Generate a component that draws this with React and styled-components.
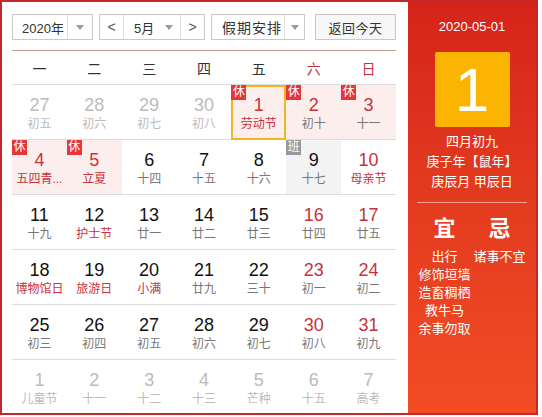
import React from 'react'
import styled, { createGlobalStyle } from 'styled-components'

const GlobalStyle = createGlobalStyle`
  body {
    margin: 0;
    background: #fff;
    font-family: "Liberation Sans", "Noto Sans CJK SC", sans-serif;
  }
`

const Frame = styled.div`
  width: 538px;
  height: 415px;
  box-sizing: border-box;
  border: 2px solid #c4282b;
  display: flex;
  overflow: hidden;
`

const LeftPanel = styled.div`
  width: 406px;
  box-sizing: border-box;
  padding: 12px 12px 0 10px;
  background: #fff;
`

const Toolbar = styled.div`
  display: flex;
  gap: 6px;
  height: 26px;
`

const Box = styled.div`
  display: flex;
  width: ${p => p.w}px;
  height: 26px;
  box-sizing: border-box;
  border: 1px solid #c8c8c8;
  background: #fff;
  color: #333;
  font-size: 13px;
`

const Value = styled.div`
  flex: 1;
  display: flex;
  align-items: center;
  padding-left: ${p => p.pl || 9}px;
  letter-spacing: ${p => p.ls || 0}px;
  font-size: ${p => p.fs || 13}px;
`

const ArrowPart = styled.div`
  width: ${p => p.w}px;
  display: flex;
  align-items: center;
  justify-content: center;
  border-left: ${p => (p.divider ? '1px solid #dedede' : 'none')};
`

const Triangle = styled.span`
  width: 0;
  height: 0;
  border-left: 4px solid transparent;
  border-right: 4px solid transparent;
  border-top: 5px solid #999;
`

const StepButton = styled.div`
  width: 23px;
  display: flex;
  align-items: center;
  justify-content: center;
  color: #555;
  font-size: 14px;
  ${p => (p.side === 'left' ? 'border-right: 1px solid #dedede;' : 'border-left: 1px solid #dedede;')}
`

const TodayButton = styled.div`
  margin-left: auto;
  width: 81px;
  height: 26px;
  box-sizing: border-box;
  border: 1px solid #c8c8c8;
  background: #f7f7f7;
  color: #333;
  font-size: 13px;
  letter-spacing: 0.5px;
  display: flex;
  align-items: center;
  justify-content: center;
`

const WeekHeader = styled.div`
  margin-top: 10px;
  border-top: 1px solid #c49a94;
  border-bottom: 1px solid #dcdcdc;
  height: 33px;
  display: grid;
  grid-template-columns: repeat(7, 1fr);
`

const WeekDay = styled.div`
  display: flex;
  align-items: center;
  justify-content: center;
  font-size: 14px;
  color: ${p => (p.weekend ? '#c8323a' : '#333')};
`

const Grid = styled.div`
  display: grid;
  grid-template-columns: repeat(7, 1fr);
  grid-auto-rows: 55px;
`

const Cell = styled.div`
  position: relative;
  box-sizing: border-box;
  border-bottom: 1px solid #dcdcdc;
  display: flex;
  flex-direction: column;
  align-items: center;
  padding-top: 9px;
  background: ${p => (p.kind === 'hol' ? '#fdeeee' : p.kind === 'work' ? '#f3f3f3' : 'transparent')};
  ${p => p.selected && 'outline: 2px solid #f3b51e; outline-offset: -2px;'}
`

const DayNum = styled.div`
  font-size: 18px;
  line-height: 22px;
  color: ${p => p.color};
`

const Lunar = styled.div`
  font-size: 12px;
  line-height: 16px;
  white-space: nowrap;
  color: ${p => p.color};
`

const Badge = styled.span`
  position: absolute;
  top: 0;
  left: 0;
  width: 15px;
  height: 15px;
  font-size: 12px;
  line-height: 15px;
  text-align: center;
  color: #fff;
  background: ${p => (p.work ? '#999' : '#e5373a')};
`

const RightPanel = styled.div`
  flex: 1;
  background: linear-gradient(180deg, #d5241a 0%, #e23a1f 45%, #f24c24 100%);
  color: #fff;
  display: flex;
  flex-direction: column;
  align-items: center;
  padding-top: 17px;
`

const DateText = styled.div`
  font-size: 13px;
  line-height: 16px;
`

const BigDay = styled.div`
  margin-top: 17px;
  width: 75px;
  height: 75px;
  border-radius: 2px;
  background: #fbb500;
  display: flex;
  align-items: center;
  justify-content: center;
  font-size: 62px;
  color: #fff;
`

const LunarInfo = styled.div`
  margin-top: 5px;
  font-size: 13px;
  line-height: 20px;
  text-align: center;
`

const Divider = styled.div`
  margin-top: 10px;
  width: 110px;
  height: 1px;
  background: #f7a08e;
`

const Columns = styled.div`
  margin-top: 13px;
  width: 110px;
  display: grid;
  grid-template-columns: 1fr 1fr;
`

const Column = styled.div`
  display: flex;
  flex-direction: column;
  align-items: center;
`

const ColTitle = styled.div`
  font-size: 22px;
  font-weight: bold;
  line-height: 26px;
  margin-bottom: 6px;
`

const ColItem = styled.div`
  font-size: 13px;
  line-height: 18px;
  white-space: nowrap;
`

const O = 'other'
const days = [
  [27, '初五', O], [28, '初六', O], [29, '初七', O], [30, '初八', O],
  [1, '劳动节', 'hol', true, true], [2, '初十', 'hol'], [3, '十一', 'hol'],
  [4, '五四青...', 'hol', true], [5, '立夏', 'hol', true], [6, '十四'], [7, '十五'], [8, '十六'], [9, '十七', 'work'], [10, '母亲节', 'we', true],
  [11, '十九'], [12, '护士节', null, true], [13, '廿一'], [14, '廿二'], [15, '廿三'], [16, '廿四', 'we'], [17, '廿五', 'we'],
  [18, '博物馆日', null, true], [19, '旅游日', null, true], [20, '小满', null, true], [21, '廿九'], [22, '三十'], [23, '初一', 'we'], [24, '初二', 'we'],
  [25, '初三'], [26, '初四'], [27, '初五'], [28, '初六'], [29, '初七'], [30, '初八', 'we'], [31, '初九', 'we'],
  [1, '儿童节', O], [2, '十一', O], [3, '十二', O], [4, '十三', O], [5, '芒种', O], [6, '十五', O], [7, '高考', O],
]

const RED = '#c8323a'

const DayCell = ({ d }) => {
  const [num, lunar, kind, fest, selected] = d
  const other = kind === O
  const numColor = other ? '#bbb' : kind === 'hol' || kind === 'we' ? RED : '#111'
  const lunarColor = other ? '#bbb' : fest ? RED : '#777'
  return (
    <Cell kind={kind} selected={selected}>
      {kind === 'hol' && <Badge>休</Badge>}
      {kind === 'work' && <Badge work>班</Badge>}
      <DayNum color={numColor}>{num}</DayNum>
      <Lunar color={lunarColor}>{lunar}</Lunar>
    </Cell>
  )
}

const App = () => {
  const weekdays = ['一', '二', '三', '四', '五', '六', '日']
  return (
    <>
      <GlobalStyle />
      <Frame>
        <LeftPanel>
          <Toolbar>
            <Box w={81}>
              <Value>2020年</Value>
              <ArrowPart w={24} divider><Triangle /></ArrowPart>
            </Box>
            <Box w={106}>
              <StepButton side="left">&lt;</StepButton>
              <Value pl={10}>5月</Value>
              <ArrowPart w={22}><Triangle /></ArrowPart>
              <StepButton side="right">&gt;</StepButton>
            </Box>
            <Box w={94}>
              <Value pl={10} fs={14} ls={1}>假期安排</Value>
              <ArrowPart w={19} divider><Triangle /></ArrowPart>
            </Box>
            <TodayButton>返回今天</TodayButton>
          </Toolbar>
          <WeekHeader>
            {weekdays.map((w, i) => (
              <WeekDay key={w} weekend={i > 4}>{w}</WeekDay>
            ))}
          </WeekHeader>
          <Grid>
            {days.map((d, i) => (
              <DayCell key={i} d={d} />
            ))}
          </Grid>
        </LeftPanel>
        <RightPanel>
          <DateText>2020-05-01</DateText>
          <BigDay>1</BigDay>
          <LunarInfo>
            <div>四月初九</div>
            <div>庚子年【鼠年】</div>
            <div>庚辰月 甲辰日</div>
          </LunarInfo>
          <Divider />
          <Columns>
            <Column>
              <ColTitle>宜</ColTitle>
              <ColItem>出行</ColItem>
              <ColItem>修饰垣墙</ColItem>
              <ColItem>造畜稠栖</ColItem>
              <ColItem>教牛马</ColItem>
              <ColItem>余事勿取</ColItem>
            </Column>
            <Column>
              <ColTitle>忌</ColTitle>
              <ColItem>诸事不宜</ColItem>
            </Column>
          </Columns>
        </RightPanel>
      </Frame>
    </>
  )
}

export default App
